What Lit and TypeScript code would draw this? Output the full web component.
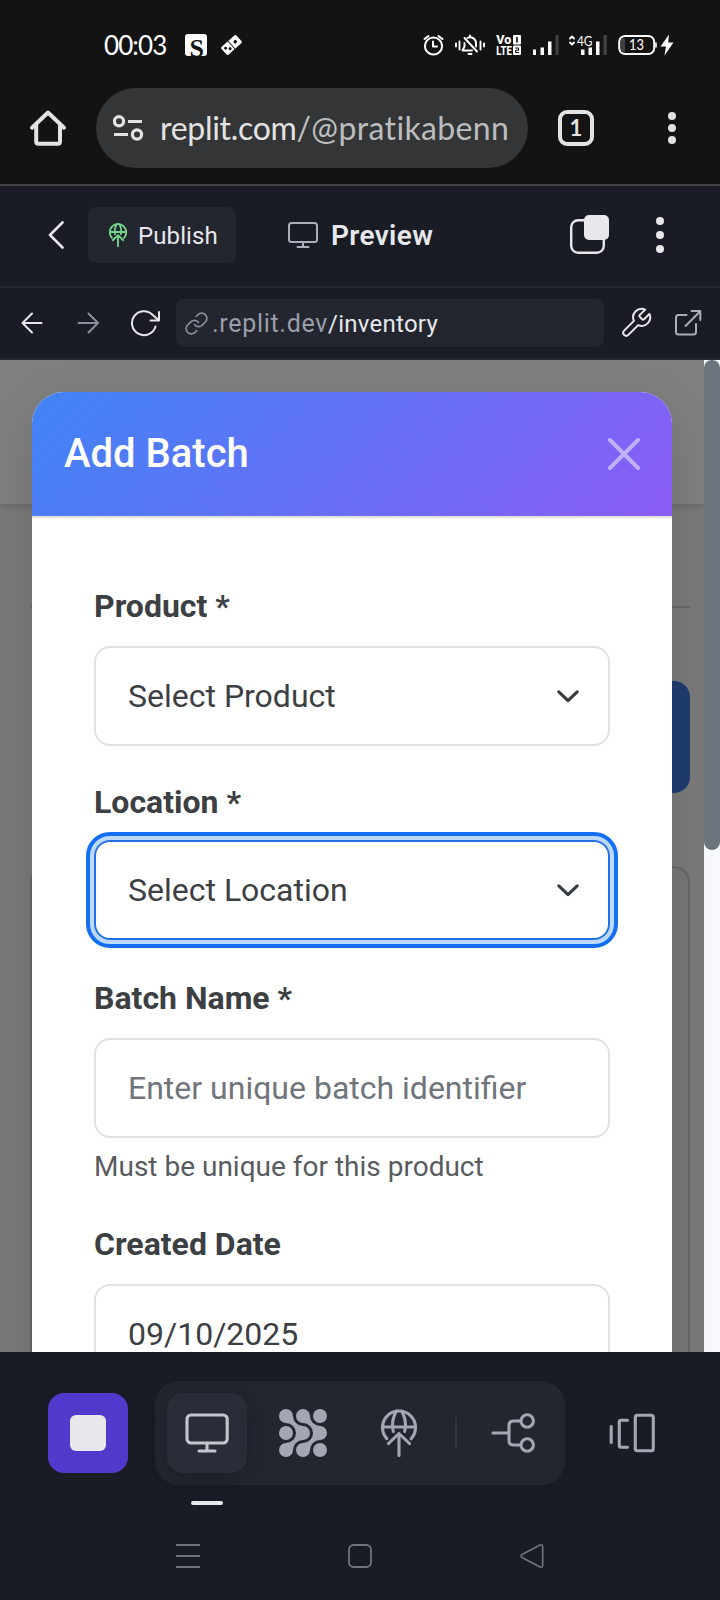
import { LitElement, html, css, svg } from "lit";
import { customElement } from "lit/decorators.js";

const icon = (cls: string, x: number, y: number, w: number, h: number, body: unknown) =>
  html`<svg class="ic ${cls}" width=${w} height=${h} viewBox="${x} ${y} ${w} ${h}">${body}</svg>`;

const iconCss = css`
  * { box-sizing: border-box; }
  .ic { display: block; flex: none; fill: none; stroke: currentColor; stroke-linecap: round; stroke-linejoin: round; }
  .solid { fill: currentColor; stroke: none; }
`;

const globe = svg`
  <path d="M386.8 1438.6A16.500 16.500 0 1 1 411.2 1438.6M382.500 1427H415.500M396.500 1411C393 1417 391.500 1424 393.300 1431.500M401.500 1411C405 1417 406.500 1424 404.700 1431.500M399 1455.400V1434.500M388.500 1443.500L399 1433.500L409.500 1443.500"/>`;

@customElement("phone-status")
class PhoneStatus extends LitElement {
  static styles = [iconCss, css`
    :host { display: flex; align-items: center; height: 88px; padding: 2px 46px 0 104px; color: #fff; }
    .time { font: 400 26px/30px "Lato", sans-serif; letter-spacing: -0.9px; width: 81px; white-space: nowrap; }
    .domino { margin-left: 14px; }
    .alarm { margin-left: auto; }
    .bell { margin-left: 10px; }
    .volte { margin-left: 10px; overflow: visible; }
    .sig { margin-left: 11px; }
    .sig2 { margin-left: 9px; }
    .batt { margin-left: 10px; }
    .bolt { margin-left: 3px; }
    .t { stroke: none; fill: #fff; font-family: "Roboto", sans-serif; font-weight: 800; }
    .n { stroke: none; fill: #fff; font-family: "Lato", sans-serif; }
    .s { stroke: none; fill: #131313; font-family: "Liberation Serif", serif; font-weight: 700; }
    .dk { fill: #131313; stroke: none; }
    .dim { fill: #414141; stroke: none; }
  `];
  render() {
    return html`
      <span class="time">00:03</span>
      ${icon("app", 185, 34, 22, 22, svg`<rect class="solid" x="185" y="34" width="22" height="22" rx="3"/><text class="s" x="189.500" y="56.500" font-size="26">S</text>`)}
      ${icon("domino", 221, 34, 21, 22, svg`<g transform="rotate(-42 231.500 45)"><rect class="solid" x="221.500" y="39.800" width="20" height="10.400" rx="1.500"/><path d="M231.500 40V50" stroke="#131313" stroke-width="1"/><circle class="dk" cx="236.500" cy="45" r="1.700"/><circle class="dk" cx="225" cy="43.500" r="1.500"/><circle class="dk" cx="228" cy="46.800" r="1.500"/></g>`)}
      ${icon("alarm", 423, 34, 21, 22, svg`<g stroke-width="2"><circle cx="433.500" cy="46" r="8.600"/><path d="M433 41.500V46.500H437M424.500 39L428.500 36M442.500 39L438.500 36"/></g>`)}
      ${icon("bell", 454, 34, 32, 22, svg`<g stroke-width="1.900"><path d="M456 43.500V46.500M459.500 41.500V49.500M484 43.500V46.500M480.500 41.500V49.500M464.500 38L477 51.500M467.500 37.800A6 6 0 0 1 476 43V46.500M464.500 43V46.500L462.500 50.500H472M470 35.500V36.500M468.500 54H471.500"/></g>`)}
      ${icon("volte", 496, 34, 26, 22, svg`<text class="t" x="496.300" y="44.300" font-size="12.500" textLength="15" lengthAdjust="spacingAndGlyphs">Vo</text><text class="t" x="496.300" y="55" font-size="12.500" textLength="15.500" lengthAdjust="spacingAndGlyphs">LTE</text><rect class="solid" x="513" y="35" width="8" height="9.500" rx="1"/><rect class="solid" x="513" y="45.500" width="8" height="9.500" rx="1"/><path d="M517 37.500V42" stroke="#131313" stroke-width="1.600"/><path d="M515.500 48H518.500V50.200H515.700V52.500H518.700" stroke="#131313" stroke-width="1.100"/>`)}
      ${icon("sig", 533, 34, 26, 22, svg`<path class="solid" d="M533 49.500h3v5.500h-3zM540.500 47.500h3.500v7.500h-3.500zM548 41.500h3.500v13.500h-3.500z"/><rect class="dim" x="555.500" y="35" width="3" height="20"/>`)}
      ${icon("sig2", 568, 34, 40, 22, svg`<path d="M570 38.500L572 36.500L574 38.500M570 42.500L572 44.500L574 42.500" stroke-width="1.800"/><text class="n" x="577" y="46" font-size="14" textLength="15.500" lengthAdjust="spacingAndGlyphs">4G</text><path class="solid" d="M581 49.500h3.500v5.500h-3.500zM588.500 47.500h3.500v7.500h-3.500zM596 41.500h3.500v13.500h-3.500z"/><rect class="dim" x="603.500" y="35" width="3.300" height="20"/>`)}
      ${icon("batt", 618, 34, 39, 22, svg`<rect x="619.200" y="35.900" width="35" height="18.200" rx="6" stroke-width="2"/><path d="M656 43V47" stroke-width="1.600"/><rect class="dim" x="621" y="38" width="4" height="14" rx="1.500"/><text class="n" x="629" y="50.200" font-size="15" textLength="15" lengthAdjust="spacingAndGlyphs">13</text>`)}
      ${icon("bolt", 660, 34, 14, 22, svg`<path class="solid" d="M669 34.500L660.500 46.500H666L664.500 55.500L673.500 42.500H668.200z"/>`)}
    `;
  }
}

@customElement("browser-bar")
class BrowserBar extends LitElement {
  static styles = [iconCss, css`
    :host { display: flex; align-items: center; height: 98px; padding: 0 44px 16px 30px; border-bottom: 2px solid #434547; color: #e3e3e3; }
    .pill { display: flex; align-items: center; width: 432px; height: 80px; margin-left: 30px; padding: 0 16px 0 17px; border-radius: 40px; background: #343537; }
    .url { margin-left: 16px; width: 352px; overflow: hidden; white-space: nowrap; font: 400 32px/44px "Lato", sans-serif; letter-spacing: -0.3px; }
    .dim { color: #bcbdbe; letter-spacing: 0.35px; }
    .tab { display: flex; align-items: center; justify-content: center; width: 36px; height: 36px; margin-left: 30px; border: 4px solid #e3e3e3; border-radius: 9px; font: 700 22px/26px "Lato", sans-serif; }
    .more { margin-left: auto; }
  `];
  render() {
    return html`
      ${icon("home", 30, 110, 36, 36, svg`<path d="M32 127.700L48 112.500L64 127.700M36.200 125V141.500Q36.200 143.700 38.400 143.700H57.800Q60 143.700 60 141.500V125" stroke-width="4"/>`)}
      <div class="pill">
        ${icon("tune", 113, 115, 31, 26, svg`<g stroke-width="3.200" stroke-linecap="butt"><circle cx="119" cy="121.300" r="4.600"/><circle cx="137" cy="134.500" r="4.600"/><path d="M128 121.500H142M114 134.500H128"/></g>`)}
        <div class="url">replit.com<span class="dim">/@pratikabenn</span></div>
      </div>
      <div class="tab">1</div>
      ${icon("more", 668, 110, 8, 36, svg`<g class="solid"><circle cx="672" cy="116" r="4"/><circle cx="672" cy="128" r="4"/><circle cx="672" cy="140" r="4"/></g>`)}
    `;
  }
}

@customElement("workspace-bar")
class WorkspaceBar extends LitElement {
  static styles = [iconCss, css`
    :host { display: block; background: #1a1c25; color: #e6e8ec; font-family: "Roboto", sans-serif; }
    .top { display: flex; align-items: center; height: 102px; padding: 0 56px 2px 48px; border-bottom: 2px solid #262831; }
    .publish { display: flex; align-items: center; width: 148px; height: 56px; margin-left: 24px; padding-left: 21px; border-radius: 8px; background: #23262f; font-size: 24px; line-height: 32px; }
    .publish .word { margin-left: 11px; padding-top: 1px; letter-spacing: 0.1px; }
    .pub { color: #74d58c; }
    .gray { color: #a9aeba; }
    .monitor { margin-left: 52px; }
    .preview { margin: 1px 0 0 13px; font-weight: 600; font-size: 28px; line-height: 36px; letter-spacing: 0.35px; }
    .tabs { margin-left: auto; }
    .dots { margin-left: 47px; }
    .addr { display: flex; align-items: center; height: 72px; padding: 0 18px 0 21px; border-bottom: 2px solid #262831; }
    .fwd { margin-left: 33px; color: #8b8f9b; }
    .reload { margin-left: 31px; }
    .field { display: flex; align-items: center; width: 428px; height: 48px; margin-left: 15px; padding-left: 8px; border-radius: 8px; background: #23262f; font-size: 24px; line-height: 32px; white-space: nowrap; }
    .field span { padding-top: 1px; }
    .link { color: #8b8f9b; }
    .host { margin-left: 3px; font-size: 25px; color: #9a9eaa; letter-spacing: 0.7px; }
    .path { letter-spacing: 0.25px; }
    .wrench { margin-left: 15px; }
    .ext { margin-left: auto; }
  `];
  render() {
    return html`
      <div class="top">
        ${icon("back", 48, 220, 16, 30, svg`<path d="M62.500 222.500L50 235L62.500 247.500" stroke-width="2.600"/>`)}
        <div class="publish">
          <svg class="ic pub" width="18" height="24" viewBox="381 1409 36 48" stroke-width="3.600">${globe}</svg>
          <span class="word">Publish</span>
        </div>
        ${icon("monitor gray", 288, 221, 30, 28, svg`<g stroke-width="2"><rect x="289" y="223" width="28" height="19" rx="2.500"/><path d="M303 242V247M297.500 247H308.500"/></g>`)}
        <span class="preview">Preview</span>
        ${icon("tabs", 570, 215, 39, 40, svg`<rect x="571.200" y="220.200" width="32.600" height="32.600" rx="7" stroke-width="2.400"/><rect class="solid" x="584" y="215" width="25" height="25" rx="5"/>`)}
        ${icon("dots", 656, 217, 8, 36, svg`<g class="solid"><circle cx="660" cy="221" r="4"/><circle cx="660" cy="235" r="4"/><circle cx="660" cy="249" r="4"/></g>`)}
      </div>
      <div class="addr">
        ${icon("prev", 21, 312, 23, 22, svg`<path d="M22.500 323H41.500M32 313.500L22.500 323L32 332.500" stroke-width="2"/>`)}
        ${icon("fwd", 77, 312, 22, 22, svg`<path d="M78.500 323H97.500M88.500 313.500L98 323L88.500 332.500" stroke-width="2"/>`)}
        ${icon("reload", 130, 309, 31, 28, svg`<path d="M155.500 326.500A12 12 0 1 1 152.500 314.700L158.500 320M159 312V320.500H150.500" stroke-width="2"/>`)}
        <div class="field">
          <svg class="ic link" width="25" height="25" viewBox="0 0 24 24" stroke-width="1.600"><path d="M10 13a5 5 0 0 0 7.540.54l3-3a5 5 0 0 0-7.070-7.070l-1.720 1.710M14 11a5 5 0 0 0-7.540-.54l-3 3a5 5 0 0 0 7.070 7.070l1.710-1.710"/></svg>
          <span class="host">.replit.dev</span><span class="path">/inventory</span>
        </div>
        <svg class="ic wrench" width="34" height="34" viewBox="0 0 24 24" stroke-width="1.400"><path d="M14.700 6.300a1 1 0 0 0 0 1.400l1.600 1.600a1 1 0 0 0 1.400 0l3.770-3.770a6 6 0 0 1-7.940 7.940l-6.910 6.910a2.120 2.120 0 0 1-3-3l6.910-6.910a6 6 0 0 1 7.940-7.940l-3.760 3.760z"/></svg>
        ${icon("ext gray", 674, 309, 28, 28, svg`<path d="M686.500 315H678.500Q676 315 676 317.500V332Q676 334.500 678.500 334.500H693.500Q696 334.500 696 332V324M685.500 326L700 311.500M691.500 311H700.300V320" stroke-width="2"/>`)}
      </div>
    `;
  }
}

@customElement("batch-form")
class BatchForm extends LitElement {
  static styles = [iconCss, css`
    :host { display: block; width: 640px; height: 1100px; border-radius: 32px 32px 0 0; overflow: hidden; background: #fff; font-family: "Roboto", sans-serif; color: #3c4043; }
    .head { display: flex; align-items: center; justify-content: space-between; height: 126px; padding: 0 31px 2px 32px; border-bottom: 2px solid #dee2e6; color: #fff; background: linear-gradient(135deg, #4084f6, #8b5cf6); background-clip: padding-box; }
    .title { padding-top: 2px; font-weight: 500; font-size: 40px; line-height: 60px; }
    .x { opacity: 0.5; margin-top: 1px; }
    .body { padding: 64px 62px 0; }
    .label { display: block; margin-bottom: 16px; font-weight: 700; font-size: 32px; line-height: 48px; }
    .box { display: flex; align-items: center; justify-content: space-between; height: 100px; margin-bottom: 32px; padding: 0 29px 0 32px; border: 2px solid #dee2e6; border-radius: 16px; font-size: 32px; line-height: 48px; }
    .focus { margin: -2px 0 34px; border-color: #2270e8; box-shadow: 0 0 0 6px #bcd9ff; outline: 4px solid #146ff5; outline-offset: 4px; }
    .ph { color: #6f757a; }
    .tight { margin-bottom: 8px; }
    .help { margin-bottom: 32px; font-size: 28px; line-height: 42px; color: #595c5f; }
    .chev { color: #343a40; }
  `];
  chevron() {
    return icon("chev", 556, 688, 22, 16, svg`<path d="M557.800 691.800L567 700.600L576.200 691.800" stroke-width="3"/>`);
  }
  render() {
    return html`
      <div class="head">
        <span class="title">Add Batch</span>
        ${icon("x", 607, 437, 34, 34, svg`<path d="M610 440L638 468M638 440L610 468" stroke-width="4"/>`)}
      </div>
      <div class="body">
        <span class="label">Product *</span>
        <div class="box"><span>Select Product</span>${this.chevron()}</div>
        <span class="label">Location *</span>
        <div class="box focus"><span>Select Location</span>${this.chevron()}</div>
        <span class="label">Batch Name *</span>
        <div class="box tight"><span class="ph">Enter unique batch identifier</span></div>
        <div class="help">Must be unique for this product</div>
        <span class="label">Created Date</span>
        <div class="box"><span>09/10/2025</span></div>
      </div>
    `;
  }
}

@customElement("tool-dock")
class ToolDock extends LitElement {
  static styles = [iconCss, css`
    :host { display: block; height: 248px; padding-top: 29px; background: #1a1c25; color: #a2a7b3; }
    .row { display: flex; align-items: center; height: 104px; padding-left: 48px; }
    .stop { display: grid; place-items: center; width: 80px; height: 80px; border-radius: 16px; background: #5338cc; }
    .sq { width: 36px; height: 36px; border-radius: 6px; background: #e6e8ec; }
    .group { display: flex; align-items: center; width: 410px; height: 104px; margin-left: 27px; padding-left: 12px; border-radius: 24px; background: #23262f; }
    .active { display: grid; place-items: center; width: 80px; height: 80px; border-radius: 16px; background: #2a2c37; color: #c3c6ce; box-shadow: 0 4px 16px rgba(18, 20, 28, 0.45); }
    .agent { margin-left: 32px; }
    .pub { margin-left: 54px; }
    .rule { width: 2px; height: 32px; margin-left: 38px; background: #31343e; }
    .share { margin-left: 34px; }
    .panes { margin-left: 43px; }
    .mark { width: 32px; height: 4px; margin: 16px 0 0 191px; border-radius: 2px; background: #e6e8ec; }
    .nav { display: flex; margin-top: 38px; color: #72747b; }
    .menu { margin-left: 175px; }
    .home { margin-left: 147px; }
    .back { margin-left: 147px; }
  `];
  render() {
    return html`
      <div class="row">
        <div class="stop"><div class="sq"></div></div>
        <div class="group">
          <div class="active">
            ${icon("mon", 185, 1413, 44, 40, svg`<g stroke-width="3.100"><rect x="187" y="1415" width="40.200" height="28" rx="4"/><path d="M207 1443V1451M199 1451H215"/></g>`)}
          </div>
          ${icon("agent", 279, 1409, 48, 48, svg`<g class="solid"><path d="M286 1409a7 7 0 0 1 7 7a10 10 0 0 0 10 10a7 7 0 0 1 0 14a10 10 0 0 0 -10 10a7 7 0 1 1 -7 -7a10 10 0 0 0 0 -20a7 7 0 0 1 0 -14zM303 1409a7 7 0 0 1 7 7a10 10 0 0 0 10 10a7 7 0 0 1 0 14a10 10 0 0 0 -10 10a7 7 0 1 1 -7 -7a10 10 0 0 0 0 -20a7 7 0 0 1 0 -14z"/><circle cx="286" cy="1433" r="7"/><circle cx="320" cy="1416" r="7"/><circle cx="320" cy="1450" r="7"/></g>`)}
          <svg class="ic pub" width="36" height="48" viewBox="381 1409 36 48" stroke-width="3.100">${globe}</svg>
          <div class="rule"></div>
          ${icon("share", 491, 1412, 45, 42, svg`<g stroke-width="3.100"><path d="M493 1433H509M520 1421H513.500Q509 1421 509 1425.500V1440.500Q509 1445 513.500 1445H520"/><circle cx="527.200" cy="1421" r="6.200"/><circle cx="527.200" cy="1445" r="6.200"/></g>`)}
        </div>
        ${icon("panes", 608, 1412, 48, 42, svg`<g stroke-width="3.100"><rect x="635.300" y="1415.300" width="18" height="35.400" rx="2"/><path d="M627.500 1420.300H621Q619.300 1420.300 619.300 1422V1445.500Q619.300 1447.300 621 1447.300H627.500M611.200 1426.500V1442.500"/></g>`)}
      </div>
      <div class="mark"></div>
      <div class="nav">
        ${icon("menu", 175, 1543, 26, 26, svg`<path d="M176 1545H200M176 1556H200M176 1567H200" stroke-width="1.800" stroke-linecap="butt"/>`)}
        ${icon("home", 348, 1543, 24, 26, svg`<rect x="349" y="1545" width="22" height="22" rx="4.500" stroke-width="1.800"/>`)}
        ${icon("back", 519, 1543, 26, 26, svg`<path d="M522 1554.500L539.500 1545.300Q542.700 1544 542.700 1547V1565Q542.700 1568 539.500 1566.700L522 1557.500Q520 1556 522 1554.500z" stroke-width="1.600"/>`)}
      </div>
    `;
  }
}

@customElement("app-root")
class AppRoot extends LitElement {
  static styles = css`
    * { box-sizing: border-box; }
    :host { display: flex; flex-direction: column; width: 720px; height: 1600px; overflow: hidden; background: #131313; }
    .stage { position: relative; display: flex; height: 992px; overflow: hidden; }
    .page { width: 704px; padding: 0 14px 0 30px; background: #7a7a7a; }
    .nav { height: 144px; margin: 0 -14px 0 -30px; background: #7f7f7f; box-shadow: 0 2px 6px rgba(0, 0, 0, 0.16); }
    .rule { height: 2px; margin-top: 102px; background: #696969; }
    .cta { width: 200px; height: 112px; margin: 73px 0 0 auto; border-radius: 16px; background: #1f3d70; }
    .card { height: 520px; margin-top: 73px; border: 2px solid #686868; border-bottom: 0; border-radius: 16px 16px 0 0; background: #777; }
    .track { width: 16px; background: #f8f9fc; }
    .thumb { height: 490px; border-radius: 8px; background: #6c757d; }
    .modal { position: absolute; top: 32px; left: 32px; border-radius: 32px; box-shadow: 0 16px 48px rgba(0, 0, 0, 0.13); }
  `;
  render() {
    return html`
      <phone-status></phone-status>
      <browser-bar></browser-bar>
      <workspace-bar></workspace-bar>
      <div class="stage">
        <div class="page">
          <div class="nav"></div>
          <div class="rule"></div>
          <div class="cta"></div>
          <div class="card"></div>
        </div>
        <div class="track"><div class="thumb"></div></div>
        <batch-form class="modal"></batch-form>
      </div>
      <tool-dock></tool-dock>
    `;
  }
}
